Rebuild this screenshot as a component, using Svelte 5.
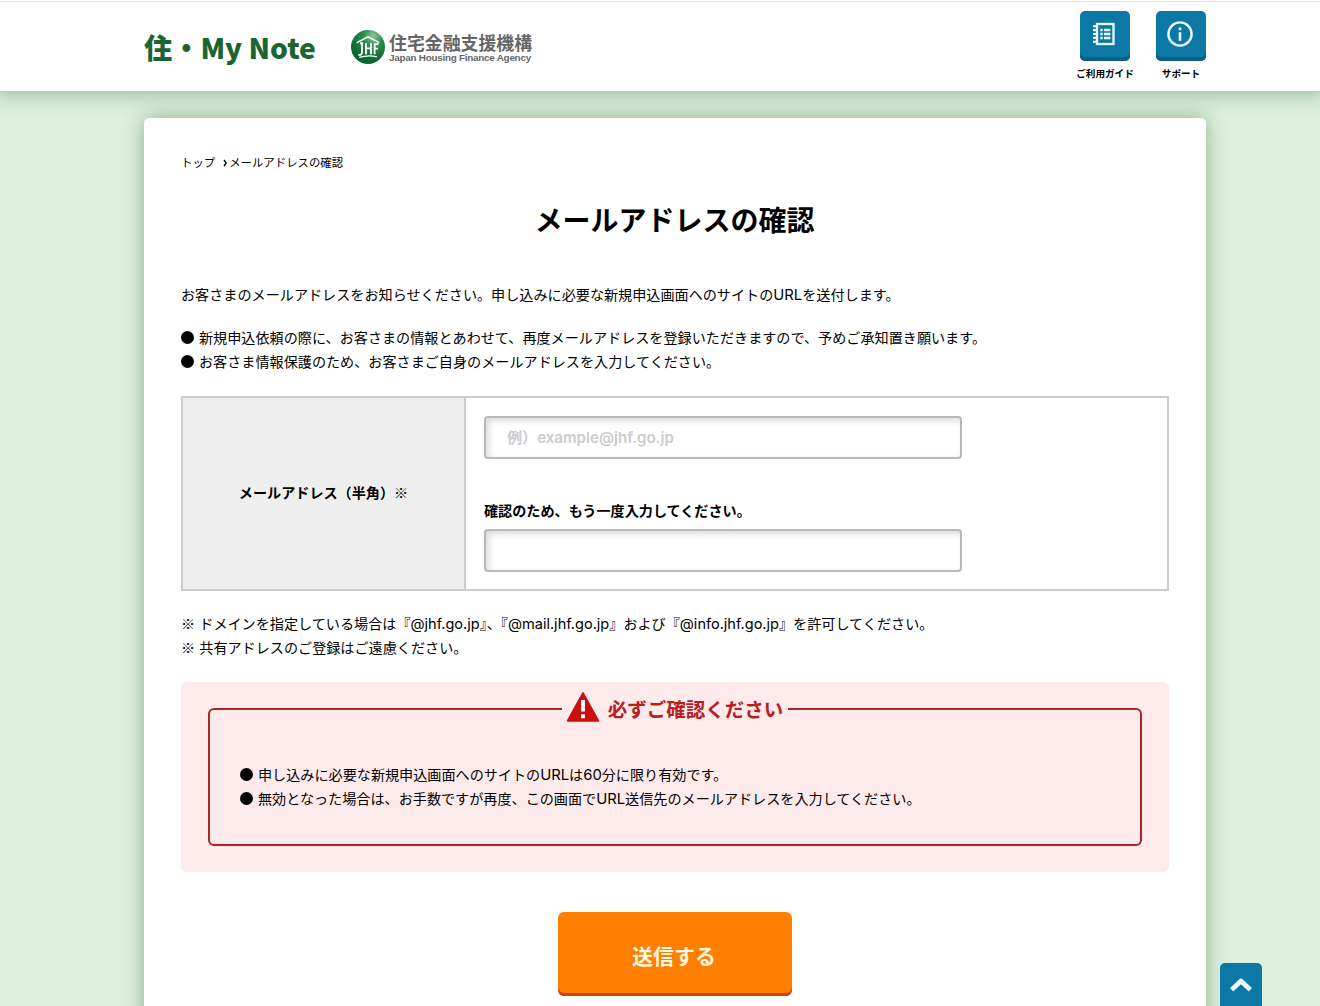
<script>
  let email = $state('');
  let emailConfirm = $state('');

  const notes = [
    '新規申込依頼の際に、お客さまの情報とあわせて、再度メールアドレスを登録いただきますので、予めご承知置き願います。',
    'お客さま情報保護のため、お客さまご自身のメールアドレスを入力してください。'
  ];
</script>

<svelte:head><title>メールアドレスの確認 | 住・My Note</title></svelte:head>

<div class="page">
  <header>
    <div class="header-inner">
      <div class="logo">住・My Note</div>
      <div class="agency">
        <svg class="mark" viewBox="0 0 34 34" aria-hidden="true">
          <defs>
            <radialGradient id="ball" cx="65%" cy="18%" r="75%">
              <stop offset="0" stop-color="#8cc79a" />
              <stop offset=".4" stop-color="#2c8b4c" />
              <stop offset="1" stop-color="#08652f" />
            </radialGradient>
          </defs>
          <circle cx="17" cy="17" r="17" fill="url(#ball)" />
          <g fill="none" stroke="#fff">
            <path d="M5.8 12.6 17 6.8l11.2 5.8" stroke-width="1.6" />
            <path d="M11 12.6v9.6c0 2.3-1.4 3-3.6 2.6M9 13.2h3" stroke-width="1.9" />
            <path d="M15 13.2v11M20 13.2v11M15 18.4h5M23.6 24.2V14.3h4M23.6 18.6h3.4" stroke-width="1.9" />
            <path d="M8.2 27.4c6-1.8 12.5-1.9 17.8-.6" stroke-width="1.3" />
          </g>
        </svg>
        <div class="agency-name">
          <p class="ja">住宅金融支援機構</p>
          <p class="en">Japan Housing Finance Agency</p>
        </div>
      </div>
      <nav>
        <a href="#guide">
          <span class="tile">
            <svg viewBox="0 0 24 24" fill="none" stroke="#e8fbff">
              <rect x="5" y="2" width="16.5" height="20" stroke-width="2.3" />
              <path d="M1 4.2h4M1 8.1h4M1 12h4M1 15.9h4M1 19.8h4" stroke-width="2.1" />
              <path d="M8.3 8h2.4M8.3 12h2.4M8.3 16h2.4M12 8h6.3M12 12h6.3M12 16h6.3" stroke-width="2.4" />
            </svg>
          </span>
          ご利用ガイド
        </a>
        <a href="#support">
          <span class="tile">
            <svg class="info" viewBox="0 0 26 26" fill="none" stroke="#e8fbff">
              <circle cx="13" cy="13" r="11.6" stroke-width="2.4" />
              <path d="M13 11.2v8.6M13 6.4v2.8" stroke-width="2.6" />
            </svg>
          </span>
          サポート
        </a>
      </nav>
    </div>
  </header>

  <main>
    <p class="crumbs">トップ<svg viewBox="0 0 5 8" fill="none" stroke="#000"><path d="M1 1l2.2 3L1 7" stroke-width="1.3" /></svg>メールアドレスの確認</p>
    <h1>メールアドレスの確認</h1>

    <p class="lead">お客さまのメールアドレスをお知らせください。申し込みに必要な新規申込画面へのサイトの<span class="lat">URL</span>を送付します。</p>
    <ul>
      {#each notes as note}
        <li><span>{note}</span></li>
      {/each}
    </ul>

    <div class="form">
      <div class="th">メールアドレス（半角）<span class="req">※</span></div>
      <div class="td">
        <input type="text" placeholder="例）example@jhf.go.jp" bind:value={email} />
        <label for="confirm">確認のため、もう一度入力してください。</label>
        <input id="confirm" type="text" bind:value={emailConfirm} />
      </div>
    </div>

    <div class="remarks">
      <p>※ ドメインを指定している場合は『<span class="lat">@jhf.go.jp</span><span class="half">』、</span>『<span class="lat">@mail.jhf.go.jp</span>』および『<span class="lat">@info.jhf.go.jp</span>』を許可してください。</p>
      <p>※ 共有アドレスのご登録はご遠慮ください。</p>
    </div>

    <section class="alert">
      <fieldset>
        <legend>
          <svg viewBox="0 0 34 30"><path d="M17 1.2 32.2 28.8H1.8z" fill="#c71010" stroke="#c71010" stroke-width="2" stroke-linejoin="round" /><path d="M17 8v11.6M17 22.2v4" stroke="#fff" stroke-width="3.8" /></svg>
          <span>必ずご確認ください</span>
        </legend>
        <ul>
          <li><span>申し込みに必要な新規申込画面へのサイトの<span class="lat">URL</span>は<span class="lat">60</span>分に限り有効です。</span></li>
          <li><span>無効となった場合は、お手数ですが再度、この画面で<span class="lat">URL</span>送信先のメールアドレスを入力してください。</span></li>
        </ul>
      </fieldset>
    </section>

    <button class="submit" type="button">送信する</button>
  </main>

  <a class="to-top" href="#top" aria-label="ページの先頭へ">
    <svg viewBox="0 0 22 15" fill="none" stroke="#e8fbff" stroke-width="4.8" stroke-linejoin="round"><path d="M1.6 12.8l9.4-8.8 9.4 8.8" /></svg>
  </a>
</div>

<style>
  :global(body) { margin: 0; }
  .page {
    position: relative;
    height: 1006px;
    overflow: hidden;
    background: #ddf0dd;
    color: #000;
    font-family: "Noto Sans CJK JP", sans-serif;
    font-size: 14.12px;
    line-height: 24px;
    white-space: nowrap;
    text-spacing-trim: space-all;
  }
  p, ul, h1 { margin: 0; padding: 0; }
  a { color: inherit; text-decoration: none; }
  svg { display: block; }
  .lat {
    font-family: Inter, "Liberation Sans", sans-serif;
    font-size: 14.8px;
    line-height: 1;
  }

  header {
    position: relative;
    box-sizing: border-box;
    height: 91px;
    background: #fff;
    box-shadow: 0 0 18px 4px rgba(30, 90, 50, 0.34);
  }
  header::before {
    content: '';
    display: block;
    height: 1px;
    padding-top: 1px;
    background: #e4e4e4;
    background-clip: content-box;
  }
  .header-inner {
    display: flex;
    width: 1062px;
    margin: 0 auto 0 144px;
  }
  .logo {
    width: 207px;
    padding-top: 30px;
    color: #1c6532;
    font-size: 28.2px;
    font-weight: 900;
    line-height: 30px;
  }
  .agency { display: flex; padding-top: 28px; }
  .mark { width: 34px; height: 34px; }
  .agency-name { padding: 2px 0 0 4px; color: #666; }
  .ja { font-size: 17.9px; font-weight: 700; line-height: 21px; }
  .en {
    font: 700 9.9px/10px "Liberation Sans", sans-serif;
    letter-spacing: -0.25px;
  }
  nav {
    display: flex;
    gap: 16px;
    margin: 9px -5px 0 auto;
  }
  nav a {
    display: flex;
    flex-direction: column;
    align-items: center;
    width: 60px;
    font-size: 9.6px;
    font-weight: 700;
    line-height: 24px;
  }
  .tile {
    display: flex;
    justify-content: center;
    box-sizing: border-box;
    width: 50px;
    height: 50px;
    padding-top: 11px;
    border-radius: 5px;
    background: #0b78a6;
    box-shadow: inset 0 -4px #095f85;
  }
  .tile svg { width: 24px; height: 24px; margin-right: 2px; }
  .tile .info { width: 26px; height: 26px; margin: -1px 2px 0 0; }

  main {
    box-sizing: border-box;
    width: 1062px;
    height: 930px;
    margin: 27px 0 0 144px;
    padding: 32px 37px 0;
    border-radius: 5px;
    background: #fff;
    box-shadow: 0 0 20px rgba(30, 90, 50, 0.42);
  }
  .crumbs { display: flex; align-items: center; font-size: 11.4px; }
  .crumbs svg { width: 5px; height: 8px; margin: 2px 1px 0 8px; }
  h1 {
    margin: 25px 1px 0 0;
    font-size: 28px;
    font-weight: 700;
    line-height: 40px;
    text-align: center;
  }
  .lead { margin: 43px 0 19px; }
  ul { list-style: none; }
  li { display: flex; align-items: center; }
  li::before {
    content: '';
    width: 13px;
    height: 13px;
    margin: 1px 5px 0 0;
    border-radius: 50%;
    background: #000;
  }

  .form {
    display: flex;
    box-sizing: border-box;
    width: 988px;
    height: 195px;
    margin-top: 23px;
    border: 2px solid #ccc;
  }
  .th {
    display: flex;
    align-items: center;
    justify-content: center;
    box-sizing: border-box;
    width: 283px;
    padding-bottom: 3px;
    border-right: 2px solid #ccc;
    background: #eee;
    font-weight: 700;
  }
  .req { font-weight: 400; }
  .td { padding: 18px; }
  input {
    display: block;
    box-sizing: border-box;
    width: 478px;
    height: 43px;
    padding: 0 21px 1px;
    border: 2px solid #b8b8b8;
    border-radius: 4px;
    box-shadow: inset 3px 3px 6px rgba(0, 0, 0, 0.14);
    font: 600 15.1px Inter, "Noto Sans CJK JP", sans-serif;
  }
  input::placeholder { color: #ccc; opacity: 1; }
  label {
    display: block;
    margin: 39px 0 7px;
    font-weight: 700;
  }

  .remarks { margin-top: 20px; word-spacing: 1px; }
  .remarks .lat { font-size: 14.55px; }
  .half { font-feature-settings: "halt"; }

  .alert {
    box-sizing: border-box;
    height: 190px;
    margin-top: 23px;
    padding: 9px 27px 0;
    border-radius: 6px;
    background: #fdeaea;
  }
  fieldset {
    box-sizing: border-box;
    height: 155px;
    margin: 0;
    padding: 35px 30px 0;
    border: 2px solid #a8272b;
    border-radius: 6px;
  }
  legend {
    display: flex;
    align-items: center;
    height: 36px;
    margin: 0 auto;
    padding: 0 5px 0 4px;
    color: #b6201f;
    font-size: 19.5px;
    font-weight: 700;
  }
  legend svg { width: 34px; height: 30px; margin: -4px 8px 0 0; }

  .submit {
    display: block;
    box-sizing: border-box;
    width: 234px;
    height: 84px;
    margin: 40px auto 0;
    padding: 2px 2px 0 0;
    border: 0;
    border-radius: 6px;
    background: #ff8000;
    box-shadow: inset 0 -3px #cc4410;
    color: #fff6dc;
    font: 700 21px "Noto Sans CJK JP", sans-serif;
  }

  .to-top {
    position: absolute;
    top: 963px;
    left: 1220px;
    display: flex;
    justify-content: center;
    box-sizing: border-box;
    width: 42px;
    height: 50px;
    padding-top: 14px;
    border-radius: 5px 5px 0 0;
    background: #0b78a6;
  }
  .to-top svg { width: 22px; height: 15px; }
</style>
